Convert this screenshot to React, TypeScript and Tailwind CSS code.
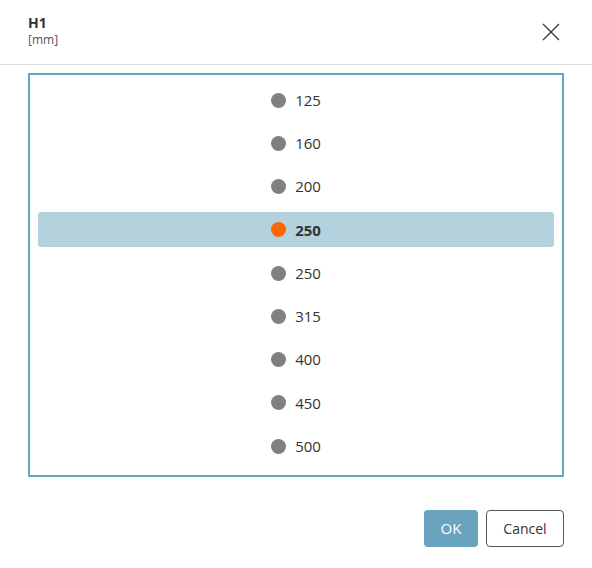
import React from 'react';

const values = ['125', '160', '200', '250', '250', '315', '400', '450', '500'];

const App: React.FC = () => {
  const selected = 3;
  return (
    <div className="w-[592px] h-[568px] bg-white flex flex-col text-[#333]" style={{ fontFamily: '"Open Sans", "Noto Sans", sans-serif' }}>
      <div className="h-[65px] flex items-start justify-between pl-[28px] pr-[32px] pt-[13px] border-b border-[#dcdcdc]">
        <div className="flex flex-col">
          <span className="text-[14px] font-bold leading-[19px]">H1</span>
          <span className="text-[12px] leading-[16px] text-[#555]">[mm]</span>
        </div>
        <button className="mt-[10px] w-[18px] h-[18px] flex items-center justify-center text-[#333]">
          <svg width="18" height="18" viewBox="0 0 18 18" fill="none" stroke="currentColor" strokeWidth="1.2">
            <path d="M1 1L17 17M17 1L1 17" />
          </svg>
        </button>
      </div>
      <div className="mx-[28px] mt-[8px] h-[404px] border-2 border-[#6aa3bd] px-[8px] pt-[3.5px] flex flex-col">
        {values.map((v, i) => (
          <div key={i} className="h-[43.25px] flex items-center">
            <div className={`w-full h-[35px] rounded-[3px] flex items-center justify-center gap-[9px] ${i === selected ? 'bg-[#b4d1de]' : ''}`}>
              <span className={`w-[15px] h-[15px] rounded-full ${i === selected ? 'bg-[#ff6600]' : 'bg-[#808080]'}`} />
              <span className={`text-[15px] ${i === selected ? 'font-bold' : ''}`}>{v}</span>
            </div>
          </div>
        ))}
      </div>
      <div className="flex justify-end gap-[8px] pr-[28px] mt-[33px]">
        <button className="w-[54px] h-[37px] rounded-[4px] bg-[#6aa3bd] text-white text-[15px]">OK</button>
        <button className="w-[78px] h-[37px] rounded-[4px] border border-[#555] bg-white text-[#333] text-[14px]">Cancel</button>
      </div>
    </div>
  );
};

export default App;
